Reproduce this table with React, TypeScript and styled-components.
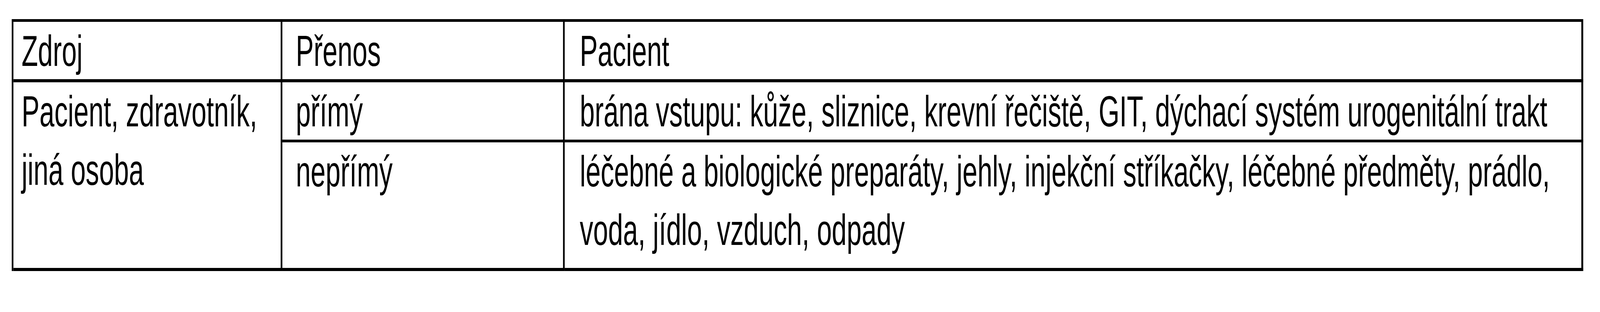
import React, { useLayoutEffect, useState } from "react";
import styled, { createGlobalStyle } from "styled-components";

const DESIGN_WIDTH = 6681;

const GlobalStyle = createGlobalStyle`
  html, body {
    margin: 0;
    padding: 0;
    background: #ffffff;
    overflow: hidden;
  }
  * {
    box-sizing: border-box;
  }
`;

const Page = styled.div`
  width: ${DESIGN_WIDTH}px;
  height: 800px;
  padding: 49px 0 0 49px;
  background: #ffffff;
  font-family: "Liberation Sans", Arial, Helvetica, sans-serif;
  font-size: 112px;
  line-height: 150px;
  color: #000000;
  transform-origin: 0 0;
`;

const Table = styled.div`
  display: grid;
  grid-template-columns: 1123px 1179px 4253px;
  grid-template-rows: 155px 154px 330px;
  width: max-content;
  border-left: 7px solid #000;
  border-top: 7px solid #000;
`;

const Cell = styled.div<{
  $pad: number;
  $right: number;
  $bottom: number;
  $rows?: number;
}>`
  grid-row: ${(p) => (p.$rows ? `span ${p.$rows}` : "auto")};
  padding: 0 20px 0 ${(p) => p.$pad}px;
  border-right: ${(p) => p.$right}px solid #000;
  border-bottom: ${(p) => p.$bottom}px solid #000;
`;

const PAD = [34, 56, 63];
const RIGHT = [7, 7, 8];

export default function App() {
  const [sx, setSx] = useState(1);
  useLayoutEffect(() => {
    const update = () =>
      setSx(Math.min(1, document.documentElement.clientWidth / DESIGN_WIDTH));
    update();
    window.addEventListener("resize", update);
    return () => window.removeEventListener("resize", update);
  }, []);

  return (
    <>
      <GlobalStyle />
      <Page style={{ transform: `scale(${sx}, 1)` }}>
        <Table>
          <Cell $pad={PAD[0]} $right={RIGHT[0]} $bottom={8}>
            Zdroj
          </Cell>
          <Cell $pad={PAD[1]} $right={RIGHT[1]} $bottom={8}>
            Přenos
          </Cell>
          <Cell $pad={PAD[2]} $right={RIGHT[2]} $bottom={8}>
            Pacient
          </Cell>
          <Cell $pad={PAD[0]} $right={RIGHT[0]} $bottom={8} $rows={2}>
            Pacient, zdravotník, jiná osoba
          </Cell>
          <Cell $pad={PAD[1]} $right={RIGHT[1]} $bottom={7}>
            přímý
          </Cell>
          <Cell $pad={PAD[2]} $right={RIGHT[2]} $bottom={7}>
            brána vstupu: kůže, sliznice, krevní řečiště, GIT, dýchací systém
            urogenitální trakt
          </Cell>
          <Cell $pad={PAD[1]} $right={RIGHT[1]} $bottom={8}>
            nepřímý
          </Cell>
          <Cell $pad={PAD[2]} $right={RIGHT[2]} $bottom={8}>
            léčebné a biologické preparáty, jehly, injekční stříkačky, léčebné
            předměty, prádlo, voda, jídlo, vzduch, odpady
          </Cell>
        </Table>
      </Page>
    </>
  );
}
